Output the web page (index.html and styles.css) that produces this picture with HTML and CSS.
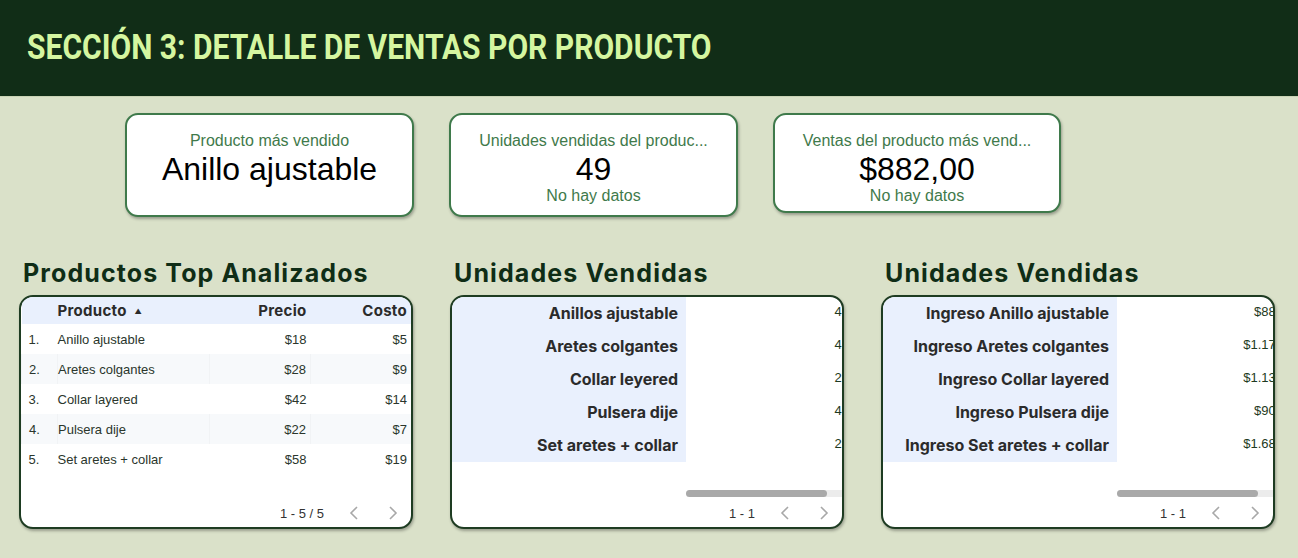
FILE: index.html
```html
<!DOCTYPE html>
<html lang="es">

<head>
    <meta charset="UTF-8">
    <title>Sección 3: Detalle de ventas por producto</title>
    <link rel="stylesheet" href="styles.css">
</head>

<body>
    <header class="banner">
        <h1 class="banner-title">SECCIÓN 3: DETALLE DE VENTAS POR PRODUCTO</h1>
    </header>

    <section class="kpis">
        <div class="kpi">
            <div class="kpi-label">Producto más vendido</div>
            <div class="kpi-value">Anillo ajustable</div>
        </div>
        <div class="kpi">
            <div class="kpi-label">Unidades vendidas del produc...</div>
            <div class="kpi-value">49</div>
            <div class="kpi-note">No hay datos</div>
        </div>
        <div class="kpi kpi-short">
            <div class="kpi-label">Ventas del producto más vend...</div>
            <div class="kpi-value">$882,00</div>
            <div class="kpi-note">No hay datos</div>
        </div>
    </section>

    <section class="panels">
        <div class="panel">
            <h2 class="panel-title">Productos Top Analizados</h2>
            <div class="box">
                <table class="grid">
                    <thead>
                        <tr>
                            <th class="col-num"></th>
                            <th class="col-name">Producto <span class="sort">&#9650;</span></th>
                            <th class="col-num-r">Precio</th>
                            <th class="col-num-r">Costo</th>
                        </tr>
                    </thead>
                    <tbody>
                        <tr><td class="col-num">1.</td><td>Anillo ajustable</td><td class="col-num-r">$18</td><td class="col-num-r">$5</td></tr>
                        <tr><td class="col-num">2.</td><td>Aretes colgantes</td><td class="col-num-r">$28</td><td class="col-num-r">$9</td></tr>
                        <tr><td class="col-num">3.</td><td>Collar layered</td><td class="col-num-r">$42</td><td class="col-num-r">$14</td></tr>
                        <tr><td class="col-num">4.</td><td>Pulsera dije</td><td class="col-num-r">$22</td><td class="col-num-r">$7</td></tr>
                        <tr><td class="col-num">5.</td><td>Set aretes + collar</td><td class="col-num-r">$58</td><td class="col-num-r">$19</td></tr>
                    </tbody>
                </table>
                <div class="pager">
                    <span class="pager-text">1 - 5 / 5</span>
                    <svg class="chev" viewBox="0 0 12 16"><path d="M9 2 L3 8 L9 14"/></svg>
                    <svg class="chev" viewBox="0 0 12 16"><path d="M3 2 L9 8 L3 14"/></svg>
                </div>
            </div>
        </div>

        <div class="panel">
            <h2 class="panel-title">Unidades Vendidas</h2>
            <div class="box">
                <div class="pivot">
                    <div class="pivot-head">
                        <div class="pivot-label">Anillos ajustable</div>
                        <div class="pivot-label">Aretes colgantes</div>
                        <div class="pivot-label">Collar leyered</div>
                        <div class="pivot-label">Pulsera dije</div>
                        <div class="pivot-label">Set aretes + collar</div>
                    </div>
                    <div class="pivot-body">
                        <div class="pivot-cell"><span>49</span></div>
                        <div class="pivot-cell"><span>42</span></div>
                        <div class="pivot-cell"><span>27</span></div>
                        <div class="pivot-cell"><span>41</span></div>
                        <div class="pivot-cell"><span>29</span></div>
                    </div>
                </div>
                <div class="scroll"><div class="scroll-thumb"></div></div>
                <div class="pager">
                    <span class="pager-text">1 - 1</span>
                    <svg class="chev" viewBox="0 0 12 16"><path d="M9 2 L3 8 L9 14"/></svg>
                    <svg class="chev" viewBox="0 0 12 16"><path d="M3 2 L9 8 L3 14"/></svg>
                </div>
            </div>
        </div>

        <div class="panel">
            <h2 class="panel-title">Unidades Vendidas</h2>
            <div class="box">
                <div class="pivot">
                    <div class="pivot-head">
                        <div class="pivot-label">Ingreso Anillo ajustable</div>
                        <div class="pivot-label">Ingreso Aretes colgantes</div>
                        <div class="pivot-label">Ingreso Collar layered</div>
                        <div class="pivot-label">Ingreso Pulsera dije</div>
                        <div class="pivot-label">Ingreso Set aretes + collar</div>
                    </div>
                    <div class="pivot-body money">
                        <div class="pivot-cell"><span>$882</span></div>
                        <div class="pivot-cell"><span>$1.176</span></div>
                        <div class="pivot-cell"><span>$1.134</span></div>
                        <div class="pivot-cell"><span>$902</span></div>
                        <div class="pivot-cell"><span>$1.682</span></div>
                    </div>
                </div>
                <div class="scroll"><div class="scroll-thumb"></div></div>
                <div class="pager">
                    <span class="pager-text">1 - 1</span>
                    <svg class="chev" viewBox="0 0 12 16"><path d="M9 2 L3 8 L9 14"/></svg>
                    <svg class="chev" viewBox="0 0 12 16"><path d="M3 2 L9 8 L3 14"/></svg>
                </div>
            </div>
        </div>
    </section>
</body>

</html>
```

FILE: styles.css
```css
html,
body {
    margin: 0;
    padding: 0;
}

body {
    background-color: #dae1c9;
    font-family: "Liberation Sans", Arial, sans-serif;
    width: 1298px;
    height: 558px;
    overflow: hidden;
}

.banner {
    background-color: #112d17;
    height: 96px;
    border-bottom: 1px solid #c9d3b5;
    display: flex;
    align-items: center;
    padding-left: 27px;
}

.banner-title {
    margin: 0 0 2px 0;
    font-family: Roboto, sans-serif;
    font-weight: 700;
    font-size: 35px;
    color: #d5f6a0;
    white-space: nowrap;
    display: inline-block;
    transform: scaleX(0.858);
    transform-origin: left center;
}

/* score cards */

.kpis {
    display: flex;
    gap: 35px;
    padding-left: 125px;
    margin-top: 16px;
    align-items: flex-start;
}

.kpi {
    width: 289px;
    height: 104px;
    background: #fff;
    border: 2px solid #3f7a4b;
    border-radius: 13px;
    box-shadow: 1px 2px 3px rgba(0, 0, 0, 0.3);
    display: flex;
    flex-direction: column;
    align-items: center;
    padding-top: 16px;
    box-sizing: border-box;
}

.kpi-short {
    width: 288px;
    height: 100px;
}

.kpi-label {
    font-size: 16px;
    color: #3f7a4b;
    line-height: 20px;
}

.kpi-value {
    font-size: 32px;
    color: #000;
    line-height: 36px;
}

.kpi-note {
    font-size: 16px;
    color: #3f7a4b;
    line-height: 18px;
}

/* panels */

.panels {
    display: flex;
    gap: 37px;
    padding-left: 19px;
    margin-top: 41px;
}

.panel {
    width: 394px;
}

.panel-title {
    margin: 0 0 7px 4px;
    font-family: Inter, sans-serif;
    font-weight: 700;
    font-size: 25px;
    letter-spacing: 1.1px;
    line-height: 30px;
    color: #0f2d16;
    white-space: nowrap;
}

.box {
    background: #fff;
    border: 2px solid #1e3c22;
    border-radius: 14px;
    height: 234px;
    box-sizing: border-box;
    box-shadow: 1px 2px 3px rgba(0, 0, 0, 0.3);
    overflow: hidden;
    display: flex;
    flex-direction: column;
}

.grid {
    width: 100%;
    border-collapse: collapse;
    font-size: 13px;
    color: #2a362c;
}

.grid th {
    background: #e9f0fd;
    height: 27px;
    font-family: Inter, sans-serif;
    font-weight: 700;
    font-size: 15px;
    letter-spacing: 0.3px;
    color: #2b2b2b;
    text-align: left;
    padding: 0;
}

.grid td {
    height: 30px;
    padding: 0;
}

.grid tbody tr:nth-child(even) td {
    background: #f7f9fb;
    border-left: 1px solid #f1f3f5;
}

.grid .col-num {
    width: 28px;
    padding-left: 7px;
}

.grid .col-num-r {
    text-align: right;
    padding-right: 4px;
    width: 96px;
}

.sort {
    font-size: 7px;
    vertical-align: 2px;
    margin-left: 4px;
}

.pager {
    margin-top: auto;
    height: 28px;
    display: flex;
    align-items: center;
    justify-content: flex-end;
    padding-right: 12px;
    font-size: 13px;
    color: #333;
}

.pager-text {
    margin-right: 24px;
}

.chev {
    width: 12px;
    height: 16px;
    margin-left: 27px;
    fill: none;
    stroke: #a8a8a8;
    stroke-width: 1.6;
}

.chev:first-of-type {
    margin-left: 0;
}

/* pivot tables */

.pivot {
    display: flex;
}

.pivot-head {
    width: 234px;
    background: #e9f0fd;
    flex-shrink: 0;
}

.pivot-label {
    height: 33px;
    line-height: 33px;
    text-align: right;
    padding-right: 8px;
    font-family: Inter, sans-serif;
    font-weight: 700;
    font-size: 16px;
    color: #2b2b2b;
    white-space: nowrap;
}

.pivot-body {
    flex: 1;
    overflow: hidden;
}

.pivot-cell {
    height: 33px;
    line-height: 30px;
    display: flex;
    justify-content: flex-end;
    font-size: 13px;
    color: #1e3a22;
}

.pivot-cell span {
    margin-right: -7px;
}

.money .pivot-cell span {
    margin-right: -10px;
}

.scroll {
    margin: 28px 0 0 234px;
    height: 7px;
    background: #ececec;
    border-radius: 4px 0 0 4px;
}

.scroll-thumb {
    width: 141px;
    height: 7px;
    background: #a9a9a9;
    border-radius: 4px;
}
```
